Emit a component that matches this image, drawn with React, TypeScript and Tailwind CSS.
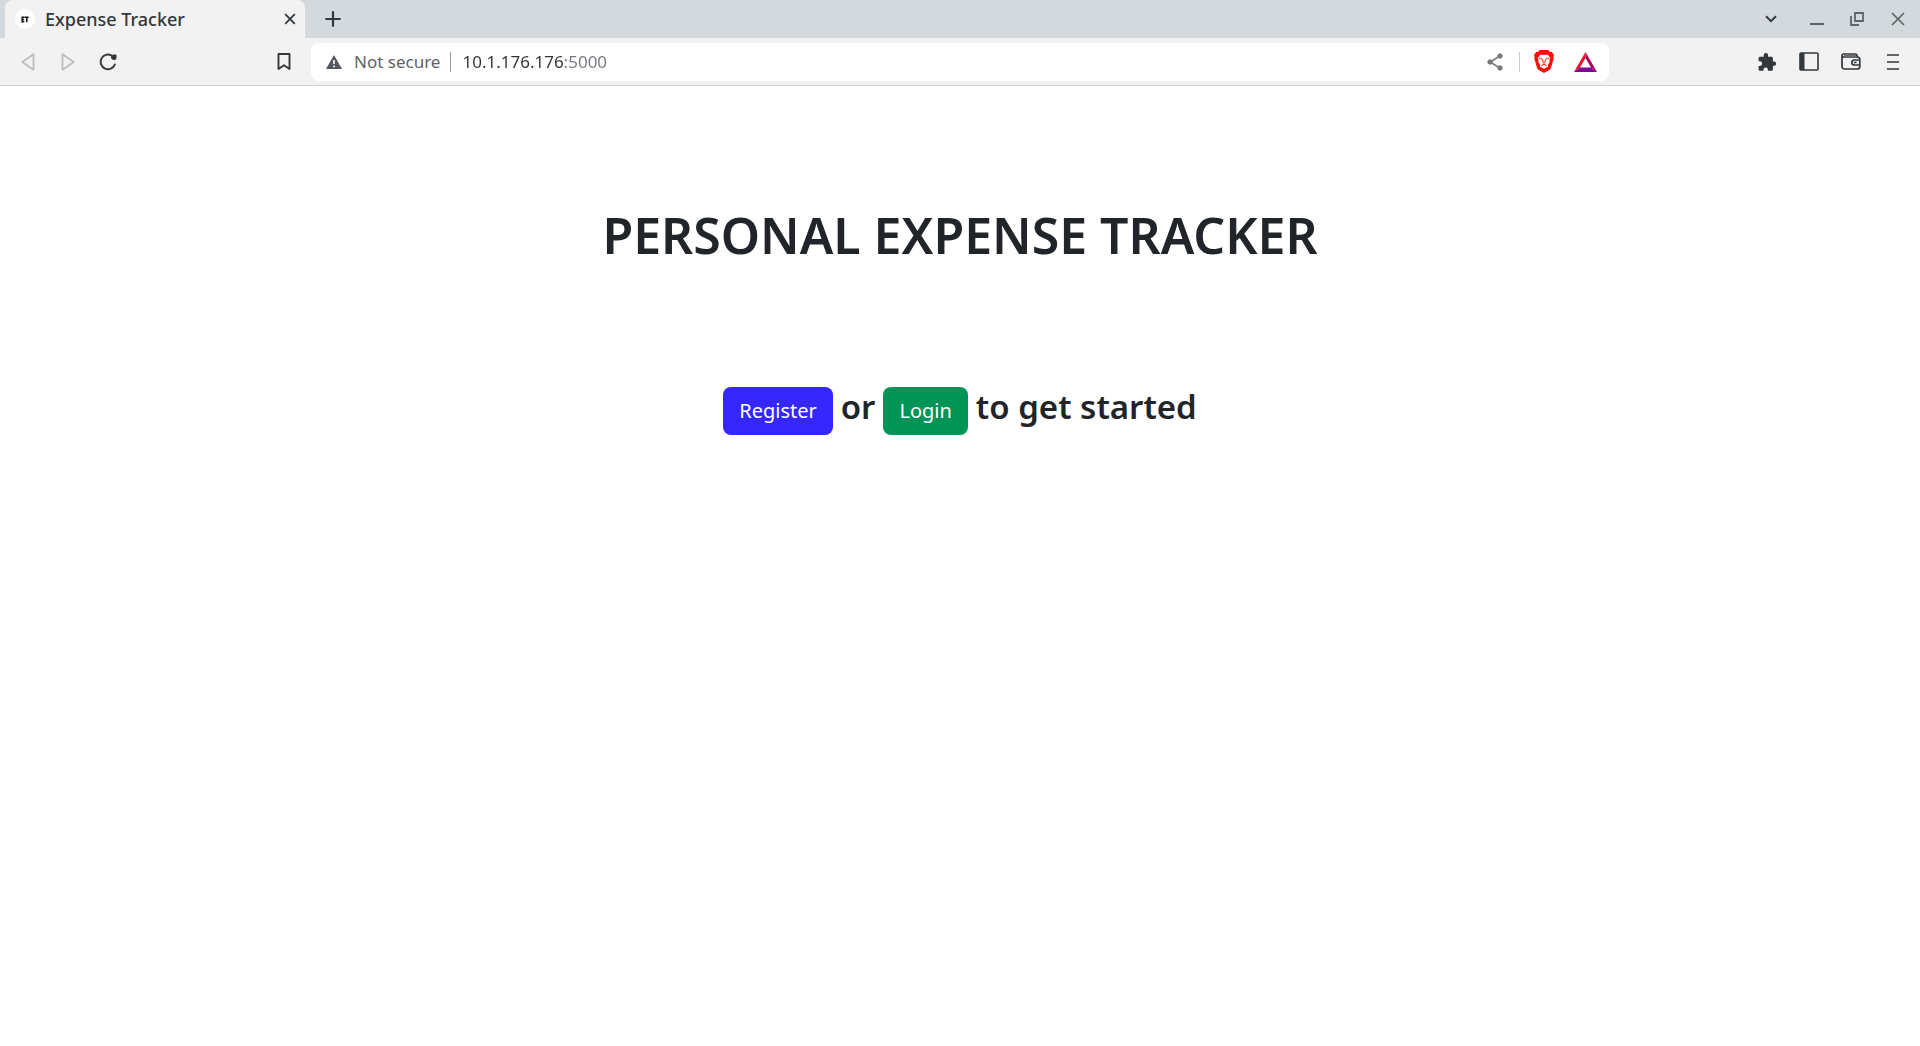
import type { ReactNode } from "react";

function IconButton({ label, className = "", children }: { label: string; className?: string; children: ReactNode }) {
  return (
    <button type="button" aria-label={label} className={`flex shrink-0 items-center justify-center ${className}`}>
      {children}
    </button>
  );
}

function TabStrip() {
  return (
    <div className="flex h-[38px] items-stretch bg-[#d3d9dc] pl-[5px] text-[#33383d]">
      <div className="flex w-[300px] items-center rounded-t-lg bg-[#f2f2f2] pr-[7px] pl-[10px]">
        <span className="flex size-5 items-center justify-center rounded-full bg-white">
          <svg width="8" height="7" viewBox="0 0 8 7" fill="none" stroke="#111" strokeWidth="1.5" aria-hidden="true">
            <path d="M3.6 1.2H1.2v4.5h2.1M1 3.4h2.2M3.9 1.2H7.6M5.8 1v5.2" />
          </svg>
        </span>
        <span className="ml-[10px] flex-1 text-[18px] leading-6 font-medium whitespace-nowrap">Expense Tracker</span>
        <IconButton label="Close tab" className="size-4">
          <svg width="12" height="12" viewBox="0 0 12 12" fill="none" stroke="currentColor" strokeWidth="1.8">
            <path d="M1.2 1.2l9.6 9.6M10.8 1.2l-9.6 9.6" />
          </svg>
        </IconButton>
      </div>
      <IconButton label="New tab" className="ml-3 w-8">
        <svg width="16" height="16" viewBox="0 0 16 16" fill="none" stroke="currentColor" strokeWidth="2.2">
          <path d="M8 1.2v13.6M1.2 8h13.6" strokeLinecap="round" />
        </svg>
      </IconButton>
      <div className="ml-auto flex items-center pr-[6px] text-[#606569]">
        <IconButton label="Search tabs" className="w-8 text-[#33383d]">
          <svg width="12" height="8" viewBox="0 0 12 8" fill="none" stroke="currentColor" strokeWidth="2">
            <path d="M1 1.2l5 5 5-5" />
          </svg>
        </IconButton>
        <IconButton label="Minimize" className="ml-[14px] h-8 w-8">
          <svg width="14" height="14" viewBox="0 0 14 14" fill="none" stroke="currentColor" strokeWidth="2">
            <path d="M0 12h14" />
          </svg>
        </IconButton>
        <IconButton label="Restore" className="ml-2 h-8 w-8">
          <svg width="14" height="14" viewBox="0 0 14 14" fill="none" stroke="currentColor" strokeWidth="1.8">
            <path d="M5 1h8v8H5zM1 4v9h8" />
          </svg>
        </IconButton>
        <IconButton label="Close window" className="ml-[9px] h-8 w-8">
          <svg width="14" height="14" viewBox="0 0 14 14" fill="none" stroke="currentColor" strokeWidth="1.7">
            <path d="M1 1l12 12M13 1L1 13" />
          </svg>
        </IconButton>
      </div>
    </div>
  );
}

function BraveIcon() {
  return (
    <svg width="20" height="23" viewBox="0 0 20 23" aria-hidden="true">
      <path
        d="M5.8 0h8.4l1.8 2 1.7-.3L20 5l-.7 2 .4 1.4-2.6 9.2c-.3 1-.9 1.8-1.7 2.3L10 23l-5.4-3.1c-.8-.5-1.400-1.300-1.700-2.300L.3 8.400.7 7 0 5l2.300-3.300L4 2z"
        fill="#fb0d08"
      />
      <path
        d="M6.500 4.500l1.500.3h4l1.500-.3 2.900 3.500-1 1.600.3 2.400-1.700 2.500.2 2L10 18.800l-4.200-2.300.2-2L4.300 12l.3-2.400-1-1.600z"
        fill="#fff"
      />
      <path
        d="M5 8l3.200 1M15 8l-3.200 1M8.500 9.200l.2 2.500 1.300.9 1.300-.9.2-2.500M10 12.600v1.600M7.300 15.700l2.700-1.500 2.700 1.500"
        fill="none"
        stroke="#fb3a20"
        strokeWidth="1.100"
      />
    </svg>
  );
}

function RewardsIcon() {
  return (
    <svg width="23" height="20" viewBox="0 0 23 20" aria-hidden="true">
      <path d="M11.500 0v6L6 15.600 0 20z" fill="#ff0a1f" />
      <path d="M11.500 0L23 20l-6-4.400L11.500 6z" fill="#b0065c" />
      <path d="M0 20l6-4.400h11L23 20z" fill="#7b0a95" />
    </svg>
  );
}

function AddressBar() {
  return (
    <div className="flex h-[38px] flex-1 items-center rounded-lg bg-white pr-3 pl-[15px] text-[#5f6368]">
      <svg width="16" height="14" viewBox="0 0 16 14" aria-hidden="true">
        <path d="M8 0l8 14H0z" fill="#55585d" />
        <path d="M8 5v4M8 10.500v1.700" stroke="#fff" strokeWidth="1.600" />
      </svg>
      <label htmlFor="address" className="ml-3 text-[17px] leading-6 whitespace-nowrap">
        Not secure
      </label>
      <span className="ml-[10px] h-5 w-px bg-[#9a9da0]" />
      <input
        id="address"
        type="text"
        defaultValue="10.1.176.176:5000"
        className="ml-[11px] min-w-0 flex-1 bg-linear-to-r from-[#303438] from-[102px] to-[#75797d] to-[102px] bg-clip-text text-[17px] leading-6 text-transparent caret-black outline-none"
      />
      <IconButton label="Share" className="size-8">
        <svg width="16" height="18" viewBox="0 0 16 18" fill="#75777a" stroke="#75777a" aria-hidden="true">
          <path d="M13 3L3 9l10 6" fill="none" strokeWidth="1.600" />
          <circle cx="13" cy="3" r="2.200" />
          <circle cx="3" cy="9" r="2.200" />
          <circle cx="13" cy="15" r="2.200" />
        </svg>
      </IconButton>
      <span className="ml-2 h-5 w-px bg-[#c8cacc]" />
      <IconButton label="Brave Shields" className="ml-2 size-8">
        <BraveIcon />
      </IconButton>
      <IconButton label="Brave Rewards" className="ml-[14px] w-[23px]">
        <RewardsIcon />
      </IconButton>
    </div>
  );
}

function Toolbar() {
  return (
    <div className="flex h-12 items-center border-b border-[#cfcfcf] bg-[#f2f2f2] pr-[11px] pl-3 text-[#33383d]">
      <IconButton label="Back" className="size-8 text-[#bdbdbd]">
        <svg width="14" height="18" viewBox="0 0 14 18" fill="none" stroke="currentColor" strokeWidth="1.800" strokeLinejoin="round">
          <path d="M12.500 1.200v15.600L1.200 9z" />
        </svg>
      </IconButton>
      <IconButton label="Forward" className="ml-2 size-8 text-[#bdbdbd]">
        <svg width="14" height="18" viewBox="0 0 14 18" fill="none" stroke="currentColor" strokeWidth="1.800" strokeLinejoin="round">
          <path d="M1.500 1.200v15.600L12.800 9z" />
        </svg>
      </IconButton>
      <IconButton label="Reload" className="ml-2 size-8">
        <svg width="18" height="18" viewBox="0 0 18 18" fill="none" stroke="currentColor" strokeWidth="1.900">
          <path d="M12.500 2.500A7.300 7.300 0 1 0 15.800 11.500" strokeLinecap="round" />
          <path d="M12 3.500c.5-1.800 2-2.100 5.500-1.800.3 3.200 0 4.700-1.800 5.200-2 .4-4.200-1.200-3.700-3.400z" fill="currentColor" stroke="none" />
        </svg>
      </IconButton>
      <IconButton label="Bookmark this tab" className="ml-36 size-8">
        <svg width="14" height="17" viewBox="0 0 14 17" fill="none" stroke="currentColor" strokeWidth="1.900" strokeLinejoin="round">
          <path d="M1.500 1h11v15L7 12.300 1.500 16z" />
        </svg>
      </IconButton>
      <div className="ml-[11px] flex flex-1">
        <AddressBar />
      </div>
      <div className="ml-[142px] flex items-center gap-[10px]">
        <IconButton label="Extensions" className="size-8">
          <svg width="18" height="18" viewBox="0 0 18 18" fill="currentColor">
            <path d="M16 8.600h-1.100V5.400c0-.9-.7-1.600-1.600-1.600h-3.200V2.200a2.200 2.200 0 0 0-4.400 0v1.600H2.200C1.300 3.800.6 4.500.6 5.400v2.900h1.200a2.300 2.300 0 0 1 0 4.600H.6v3.300c0 .9.7 1.600 1.600 1.600h3.300v-1.200a2.200 2.200 0 0 1 4.400 0v1.200h3.400c.9 0 1.600-.7 1.600-1.600v-3.400H16a2.100 2.100 0 0 0 0-4.200z" />
          </svg>
        </IconButton>
        <IconButton label="Sidebar" className="size-8">
          <svg width="20" height="19" viewBox="0 0 20 19" fill="none" stroke="currentColor" strokeWidth="1.600">
            <rect x="1" y="1" width="18" height="17" rx="1" />
            <path d="M1 1h4.500v17H1z" fill="currentColor" stroke="none" />
          </svg>
        </IconButton>
        <IconButton label="Wallet" className="size-8">
          <svg width="20" height="17" viewBox="0 0 20 17" fill="none" stroke="currentColor" strokeWidth="1.700">
            <path d="M1 3v10.500A2.500 2.500 0 0 0 3.500 16h12.800a2.500 2.500 0 0 0 2.500-2.500V6.500a2.500 2.500 0 0 0-2.500-2.500H3.200A2.200 2.200 0 0 1 1 2.500C1 1.600 1.800 1 2.600 1h11.200c1.500 0 2.400 1 2.400 2.500" />
            <path d="M3 1.800h11.500L16 4H3z" fill="#6a6d70" stroke="none" />
            <path d="M19 7h-5.600a2.500 2.500 0 0 0 0 5H19M13 9.500h2.500" />
          </svg>
        </IconButton>
        <IconButton label="Menu" className="size-8">
          <svg width="12" height="16" viewBox="0 0 12 16" stroke="currentColor" strokeWidth="1.700">
            <path d="M0 1h12M0 8h12M0 15h12" />
          </svg>
        </IconButton>
      </div>
    </div>
  );
}

export default function App() {
  return (
    <div className="min-h-screen bg-white font-['Noto_Sans',sans-serif]">
      <header>
        <TabStrip />
        <Toolbar />
      </header>
      <main className="flex flex-col items-center px-4 pt-[119px] text-[#212529]">
        <h1 className="text-center text-[50px] leading-[60px] font-semibold">PERSONAL EXPENSE TRACKER</h1>
        <div className="mt-[122px] flex flex-wrap items-start justify-center gap-2 text-[33px] leading-10 font-semibold">
          <button type="button" className="h-12 rounded-lg bg-[#3626ff] px-4 text-[20px] leading-[30px] font-normal text-white">
            Register
          </button>
          <span>or</span>
          <button type="button" className="h-12 rounded-lg bg-[#009557] px-4 text-[20px] leading-[30px] font-normal text-white">
            Login
          </button>
          <span>to get started</span>
        </div>
      </main>
    </div>
  );
}
